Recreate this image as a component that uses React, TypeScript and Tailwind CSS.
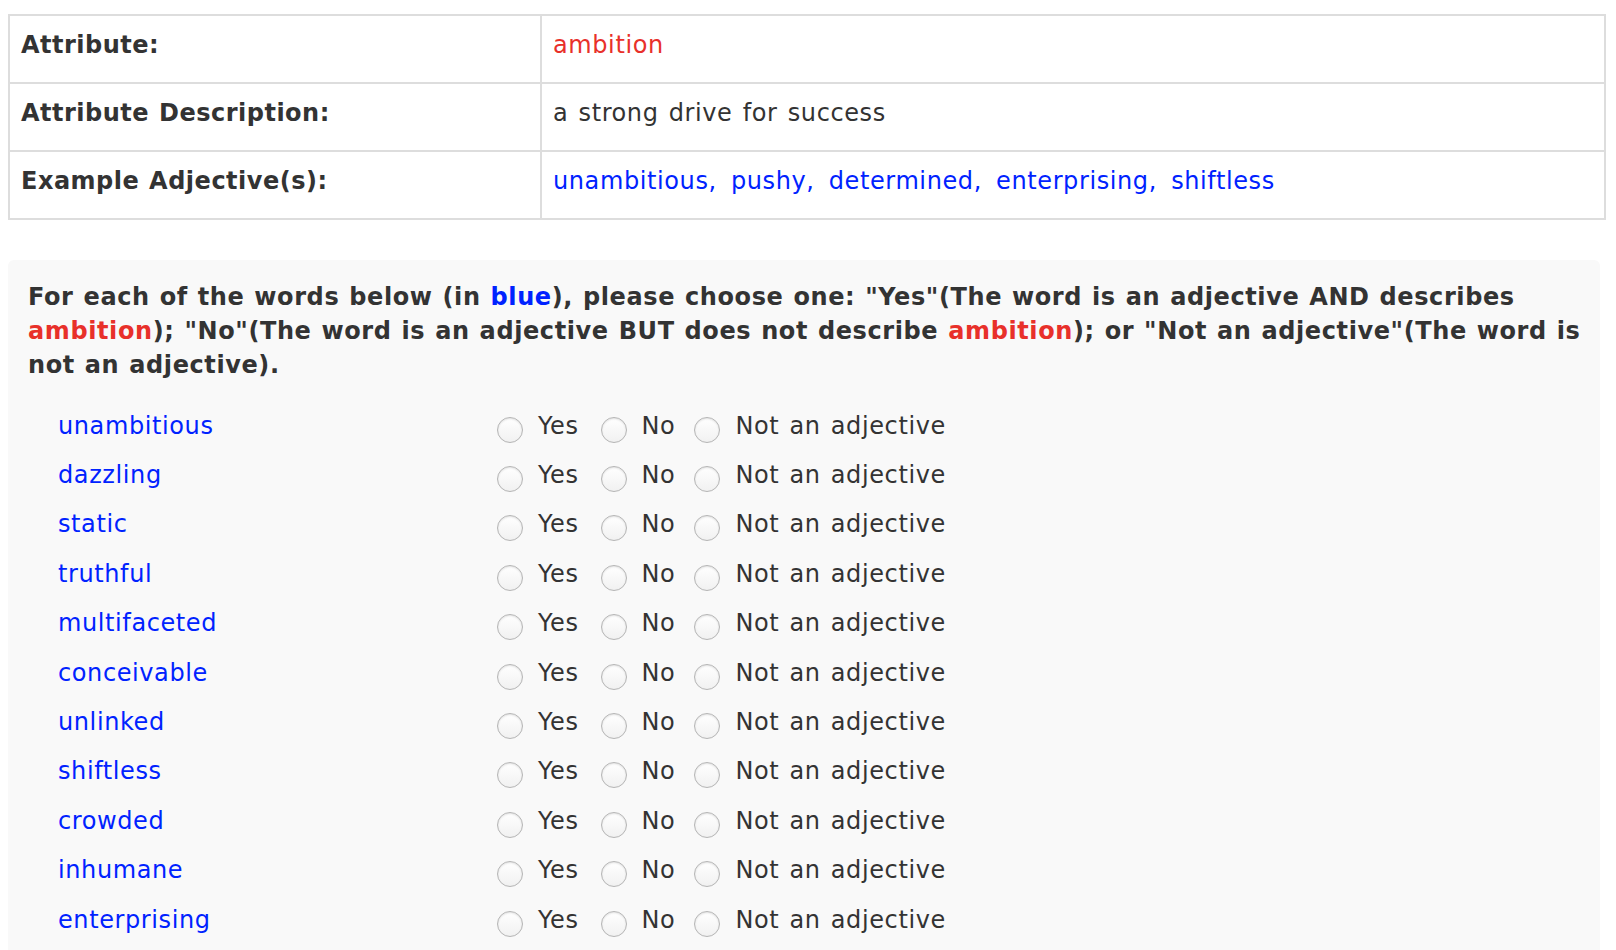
const words = [
  'unambitious',
  'dazzling',
  'static',
  'truthful',
  'multifaceted',
  'conceivable',
  'unlinked',
  'shiftless',
  'crowded',
  'inhumane',
  'enterprising',
];

const options = ['Yes', 'No', 'Not an adjective'];

function Radio() {
  return (
    <span className="inline-block w-[26px] h-[26px] rounded-full border border-[#b5b5b5] bg-gradient-to-b from-white to-[#f1f1f1] shadow-[inset_0_1px_2px_rgba(0,0,0,0.12)] mt-[8px] shrink-0" />
  );
}

export default function App() {
  return (
    <div className="min-h-screen bg-white text-[#333] font-['DejaVu_Sans',Verdana,sans-serif] text-[24px] tracking-[0.6px] [word-spacing:2px] pt-[14px] px-[8px]">
      {/* Attribute table */}
      <table className="w-[1598px] border-collapse border-2 border-[#dddddd]">
        <tbody>
          <tr className="h-[68px]">
            <td className="w-[532px] border-2 border-[#dddddd] px-[11px] pb-[8px] font-bold tracking-[0.5px] [word-spacing:1px]">Attribute:</td>
            <td className="border-2 border-[#dddddd] px-[11px] pb-[8px] text-[#e8302a]">ambition</td>
          </tr>
          <tr className="h-[68px]">
            <td className="border-2 border-[#dddddd] px-[11px] pb-[8px] font-bold tracking-[0.5px] [word-spacing:1px]">Attribute Description:</td>
            <td className="border-2 border-[#dddddd] px-[11px] pb-[8px]">a strong drive for success</td>
          </tr>
          <tr className="h-[68px]">
            <td className="border-2 border-[#dddddd] px-[11px] pb-[8px] font-bold tracking-[0.5px] [word-spacing:1px]">Example Adjective(s):</td>
            <td className="border-2 border-[#dddddd] px-[11px] pb-[8px] text-[#0022ff] [word-spacing:6px]">
              unambitious, pushy, determined, enterprising, shiftless
            </td>
          </tr>
        </tbody>
      </table>

      {/* Question box */}
      <div className="mt-[40px] w-[1592px] bg-[#f9f9f9] rounded-[6px] px-[20px] pt-[20px] pb-[20px]">
        <p className="font-bold leading-[34px] tracking-[0.6px] [word-spacing:1px] whitespace-nowrap">
          For each of the words below (in <span className="text-[#0022ff]">blue</span>), please choose one: "Yes"(The word is an adjective AND describes
          <br />
          <span className="text-[#e8302a]">ambition</span>); "No"(The word is an adjective BUT does not describe{' '}
          <span className="text-[#e8302a]">ambition</span>); or "Not an adjective"(The word is
          <br />
          not an adjective).
        </p>

        <div className="mt-[19px] flex flex-col">
          {words.map((w) => (
            <div key={w} className="flex h-[49.4px] items-center">
              <div className="w-[469px] pl-[30px] text-[#0022ff]">{w}</div>
              <div className="flex items-center">
                {options.map((o, i) => (
                  <label
                    key={o}
                    className={`flex items-center ${i === 1 ? 'ml-[22px]' : ''} ${i === 2 ? 'ml-[19px]' : ''}`}
                  >
                    <Radio />
                    <span className="ml-[15px]">{o}</span>
                  </label>
                ))}
              </div>
            </div>
          ))}
        </div>
      </div>
    </div>
  );
}
